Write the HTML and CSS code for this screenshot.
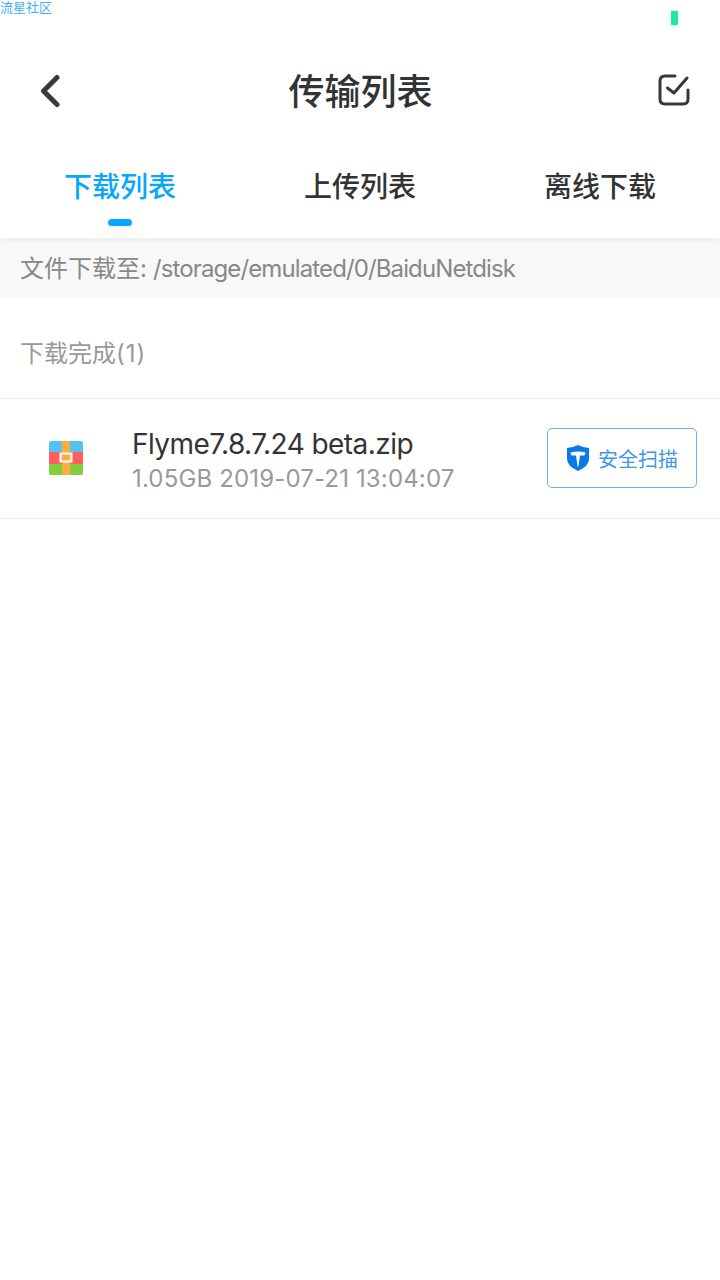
FILE: index.html
```html
<!DOCTYPE html>
<html lang="zh">
<head>
<meta charset="utf-8">
<title>传输列表</title>
<link rel="stylesheet" href="styles.css">
</head>
<body>
<div class="page">
  <div class="statusbar">
    <span class="brand">流星社区</span>
    <span class="battery"></span>
  </div>
  <header class="titlebar">
    <svg class="back" width="24" height="36" viewBox="0 0 24 36"><path d="M19 5.500 L5.500 19 L19 32.500" fill="none" stroke="#3a3a3a" stroke-width="5" stroke-linecap="round" stroke-linejoin="round"/></svg>
    <h1 class="title">传输列表</h1>
    <svg class="select" width="34" height="34" viewBox="0 0 34 34"><path d="M18 3 H8 Q3 3 3 8 V26 Q3 31 8 31 H26 Q31 31 31 26 V17" fill="none" stroke="#383838" stroke-width="3" stroke-linecap="round"/><path d="M10.500 15 L17 20 L30 5" fill="none" stroke="#383838" stroke-width="3" stroke-linecap="round" stroke-linejoin="round"/></svg>
  </header>
  <nav class="tabs">
    <div class="tab active">下载列表<span class="indicator"></span></div>
    <div class="tab">上传列表</div>
    <div class="tab">离线下载</div>
  </nav>
  <div class="pathbar">文件下载至:<span class="path">/storage/emulated/0/BaiduNetdisk</span></div>
  <div class="section">下载完成<span class="count">(1)</span></div>
  <div class="row">
    <svg class="zip" width="34" height="34" viewBox="0 0 34 34">
      <path d="M2 0 H32 Q34 0 34 2 V12 H0 V2 Q0 0 2 0 Z" fill="#54c1f5"/>
      <rect y="11" width="34" height="12" fill="#ff5f5f"/>
      <path d="M0 23 H34 V32 Q34 34 32 34 H2 Q0 34 0 32 Z" fill="#7fd03b"/>
      <rect x="13" width="8" height="34" fill="#ffad3d"/>
      <rect x="11.500" y="12.500" width="11" height="8" fill="#ffad3d" stroke="#fff" stroke-width="2"/>
    </svg>
    <div class="file">
      <div class="name">Flyme7.8.7.24 beta.zip</div>
      <div class="meta">1.05GB 2019-07-21 13:04:07</div>
    </div>
    <button class="scan">
      <svg width="22" height="26" viewBox="0 0 22 26"><path d="M11 0 Q17 3 22 3 V14 Q22 21 11 26 Q0 21 0 14 V3 Q5 3 11 0 Z" fill="#0d79e6"/><path d="M3.500 7.500 Q11 5.500 18.500 7.500 L17.500 10.500 H13 L11.300 22 H10.700 L9 10.500 H4.500 Z" fill="#fff"/></svg>
      <span class="scan-label">安全扫描</span>
    </button>
  </div>
</div>
</body>
</html>
```
FILE: styles.css
```css
* { box-sizing: border-box; }
html, body { margin: 0; padding: 0; background: #fff; }
body { font-family: Inter, "Noto Sans CJK SC", sans-serif; }
.page { width: 720px; height: 1280px; overflow: hidden; background: #fff; }

.statusbar { height: 50px; display: flex; justify-content: space-between; align-items: flex-start; }
.brand { font-size: 13px; line-height: 15px; color: #45aef5; }
.battery { width: 7px; height: 14px; margin: 11px 42px 0 0; background: #1ceb9d; }

.titlebar { height: 80px; display: flex; align-items: center; justify-content: space-between; padding: 0 29px 0 38px; }
.back { display: block; }
.title { margin: 0; font-size: 36px; line-height: 76px; font-weight: 500; color: #333; padding: 4px 0 0 2px; }
.select { display: block; }

.tabs { height: 108px; display: grid; grid-template-columns: repeat(3, 240px); box-shadow: 0 3px 5px -2px rgba(0,0,0,.07); position: relative; }
.tab { position: relative; text-align: center; font-size: 28px; line-height: 36px; font-weight: 500; color: #333; padding-top: 39px; }
.tab.active { color: #06a7ff; }
.indicator { position: absolute; left: 108px; top: 89px; width: 24px; height: 7px; border-radius: 3.500px; background: #06a7ff; }

.pathbar { height: 60px; padding-left: 20px; background: #f8f8f8; font-size: 24px; line-height: 61px; color: #888; }
.path { margin-left: 6px; letter-spacing: -.88px; }
.section { height: 101px; padding-left: 20px; font-size: 24px; line-height: 111px; color: #999; border-bottom: 1px solid #eee; }
.count { letter-spacing: 1px; }

.row { height: 120px; display: flex; align-items: center; padding: 0 23px 0 49px; border-bottom: 1px solid #eee; }
.zip { flex: none; position: relative; top: -1px; }
.file { flex: 1; margin-left: 49px; padding-top: 4px; }
.name { font-size: 28px; line-height: 36px; color: #333; letter-spacing: -.55px; }
.meta { font-size: 24px; line-height: 34px; color: #999; letter-spacing: .15px; }
.scan { width: 150px; height: 60px; display: flex; align-items: center; gap: 9px; padding: 0 0 0 19px; border: 1px solid #6fb3ee; border-radius: 5px; background: #fff; font: inherit; font-size: 20px; color: #3f96e6; position: relative; top: -1px; }
.scan svg { flex: none; }
.scan-label { padding-top: 2px; }
```
